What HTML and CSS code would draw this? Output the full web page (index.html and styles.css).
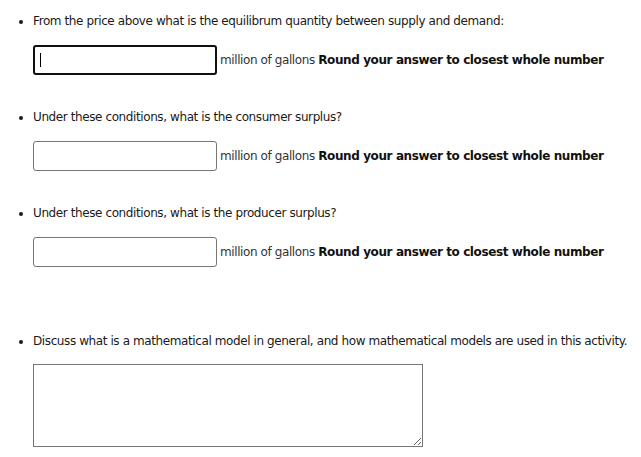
FILE: index.html
```html
<!DOCTYPE html>
<html>
<head>
<meta charset="utf-8">
<link rel="stylesheet" href="styles.css">
</head>
<body>
<ul class="questions">
  <li class="item">
    <p class="q">From the price above what is the equilibrum quantity between supply and demand:</p>
    <div class="row"><span class="field"><input class="answer focused" type="text"><span class="caret"></span></span><span class="unit">million of gallons <b>Round your answer to closest whole number</b></span></div>
  </li>
  <li class="item">
    <p class="q">Under these conditions, what is the consumer surplus?</p>
    <div class="row"><span class="field"><input class="answer" type="text"></span><span class="unit">million of gallons <b>Round your answer to closest whole number</b></span></div>
  </li>
  <li class="item item-last-input">
    <p class="q">Under these conditions, what is the producer surplus?</p>
    <div class="row"><span class="field"><input class="answer" type="text"></span><span class="unit">million of gallons <b>Round your answer to closest whole number</b></span></div>
  </li>
  <li class="item">
    <p class="q q-essay">Discuss what is a mathematical model in general, and how mathematical models are used in this activity.</p>
    <textarea class="essay"></textarea>
  </li>
</ul>
</body>
</html>
```
FILE: styles.css
```css
html, body {
  margin: 0;
  padding: 0;
  background: #fff;
}
body {
  font-family: "DejaVu Sans", Verdana, sans-serif;
  font-size: 12px;
  letter-spacing: -0.4px;
  color: #1a1a1a;
}
.questions {
  margin: 0;
  padding: 13px 0 0 33px;
  list-style: disc;
}
.item {
  margin-bottom: 34px;
}
.item:last-child {
  margin-bottom: 0;
}
.item-last-input {
  margin-bottom: 66px;
}
.q {
  margin: 0 0 16px;
  line-height: 16px;
}
.q-essay {
  margin-bottom: 15px;
}
.row {
  display: flex;
  align-items: center;
  height: 30px;
}
.field {
  position: relative;
  display: block;
  margin-right: 3px;
}
.answer {
  display: block;
  box-sizing: border-box;
  width: 184px;
  height: 30px;
  margin: 0;
  padding: 0 6px;
  border: 1px solid #767676;
  border-radius: 3px;
  font: inherit;
  outline: none;
}
.answer.focused {
  border: 2px solid #101010;
}
.caret {
  position: absolute;
  left: 7px;
  top: 8px;
  width: 1px;
  height: 14px;
  background: #000;
}
.unit {
  color: #333;
}
.unit b {
  color: #111;
}
.essay {
  display: block;
  box-sizing: border-box;
  width: 390px;
  height: 83px;
  margin: 0;
  border: 1px solid #767676;
  border-radius: 0;
  font: inherit;
  vertical-align: top;
}
```
